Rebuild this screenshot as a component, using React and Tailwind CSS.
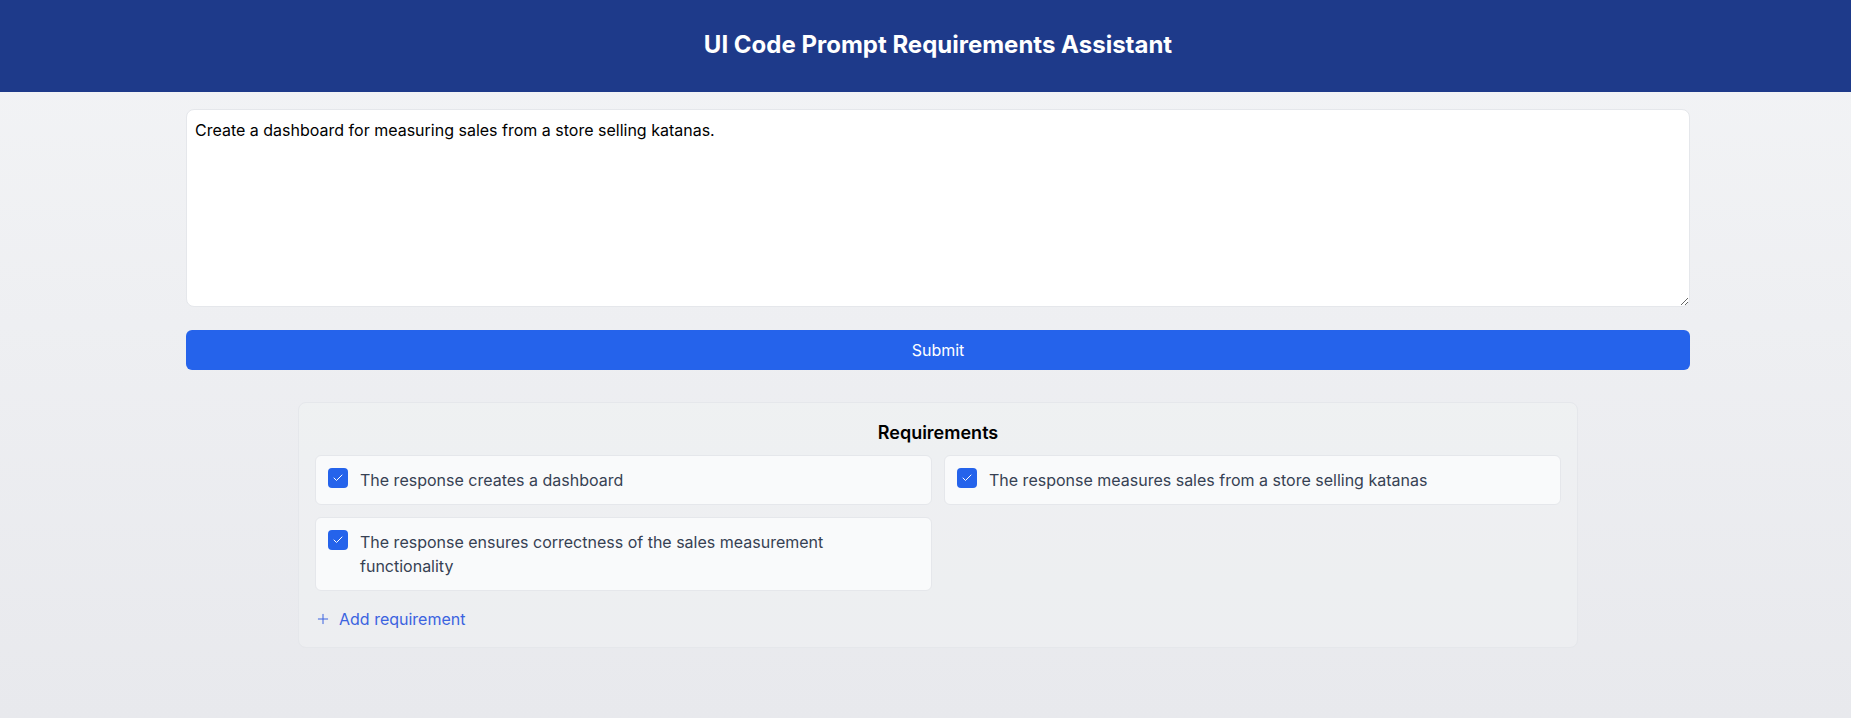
import { Check, Plus } from "lucide-react";

const requirements = [
  "The response creates a dashboard",
  "The response measures sales from a store selling katanas",
  "The response ensures correctness of the sales measurement functionality",
];

export default function App() {
  return (
    <div className="min-h-screen bg-gradient-to-b from-gray-100 to-[#e8e9ed] font-['Inter',sans-serif]">
      <header className="bg-[#1e3a8a] h-[92px] flex items-center justify-center pl-[25px] pb-[2px]">
        <h1 className="text-2xl font-bold text-white">UI Code Prompt Requirements Assistant</h1>
      </header>

      <main className="pl-[25px] pt-[17px] pb-10">
        <div className="max-w-[1504px] mx-auto">
          <textarea
            className="block w-full h-[198px] bg-white border border-gray-200 rounded-lg p-2 text-base text-black outline-none"
            defaultValue="Create a dashboard for measuring sales from a store selling katanas."
          />
          <button className="mt-[23px] w-full h-10 bg-[#2563eb] text-white text-base rounded-md">
            Submit
          </button>
        </div>

        <section className="max-w-7xl mx-auto mt-8 border border-gray-200 rounded-lg bg-gray-100/40 p-4">
          <h2 className="text-lg font-semibold text-black text-center mb-2">Requirements</h2>
          <div className="grid grid-cols-2 gap-3 items-start">
            {requirements.map((req) => (
              <div
                key={req}
                className="flex items-start gap-3 bg-gray-50 border border-gray-200 rounded-md px-3 py-3"
              >
                <span className="w-5 h-5 shrink-0 rounded bg-[#2563eb] flex items-center justify-center">
                  <Check size={12} strokeWidth={2} className="text-white" />
                </span>
                <span className="text-base text-gray-700 leading-6">{req}</span>
              </div>
            ))}
          </div>
          <button className="mt-4 flex items-center gap-2 text-base text-[#3b63e0]">
            <Plus size={16} strokeWidth={1.5} />
            Add requirement
          </button>
        </section>
      </main>
    </div>
  );
}
